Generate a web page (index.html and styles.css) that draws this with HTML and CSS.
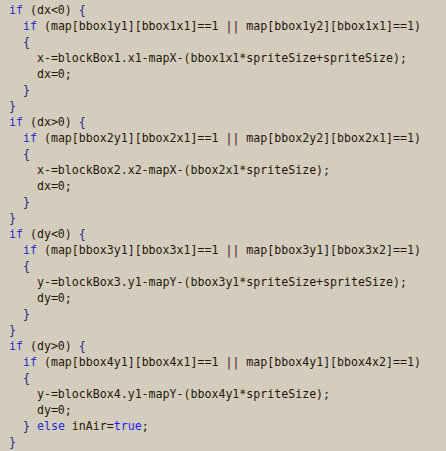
FILE: index.html
```html
<!DOCTYPE html>
<html>
<head>
<meta charset="utf-8">
<link rel="stylesheet" href="styles.css">
</head>
<body>
<pre class="code"><span class="kw">if</span> (dx&lt;0) <span class="br">{</span>
  <span class="kw">if</span> (map[bbox1y1][bbox1x1]==1 <span class="op">||</span> map[bbox1y2][bbox1x1]==1)
  <span class="br">{</span>
    x-=blockBox1.x1-mapX-(bbox1x1*spriteSize+spriteSize);
    dx=0;
  <span class="br">}</span>
<span class="br">}</span>
<span class="kw">if</span> (dx&gt;0) <span class="br">{</span>
  <span class="kw">if</span> (map[bbox2y1][bbox2x1]==1 <span class="op">||</span> map[bbox2y2][bbox2x1]==1)
  <span class="br">{</span>
    x-=blockBox2.x2-mapX-(bbox2x1*spriteSize);
    dx=0;
  <span class="br">}</span>
<span class="br">}</span>
<span class="kw">if</span> (dy&lt;0) <span class="br">{</span>
  <span class="kw">if</span> (map[bbox3y1][bbox3x1]==1 <span class="op">||</span> map[bbox3y1][bbox3x2]==1)
  <span class="br">{</span>
    y-=blockBox3.y1-mapY-(bbox3y1*spriteSize+spriteSize);
    dy=0;
  <span class="br">}</span>
<span class="br">}</span>
<span class="kw">if</span> (dy&gt;0) <span class="br">{</span>
  <span class="kw">if</span> (map[bbox4y1][bbox4x1]==1 <span class="op">||</span> map[bbox4y1][bbox4x2]==1)
  <span class="br">{</span>
    y-=blockBox4.y1-mapY-(bbox4y1*spriteSize);
    dy=0;
  <span class="br">}</span> <span class="kw">else</span> inAir=<span class="kw2">true</span>;
<span class="br">}</span></pre>
</body>
</html>
```

FILE: styles.css
```css
html, body {
  margin: 0;
  padding: 0;
  background: #d4cdbe;
}
.code {
  margin: 0;
  padding: 2px 0 0 9px;
  font-family: "DejaVu Sans Mono", "Liberation Mono", monospace;
  font-size: 11.6px;
  line-height: 16px;
  color: #24170a;
}
.kw { color: #1f2fd0; }
.kw2 { color: #1a1aff; }
.br { color: #1c2a8a; }
.op { color: #4a0a2a; }
```
